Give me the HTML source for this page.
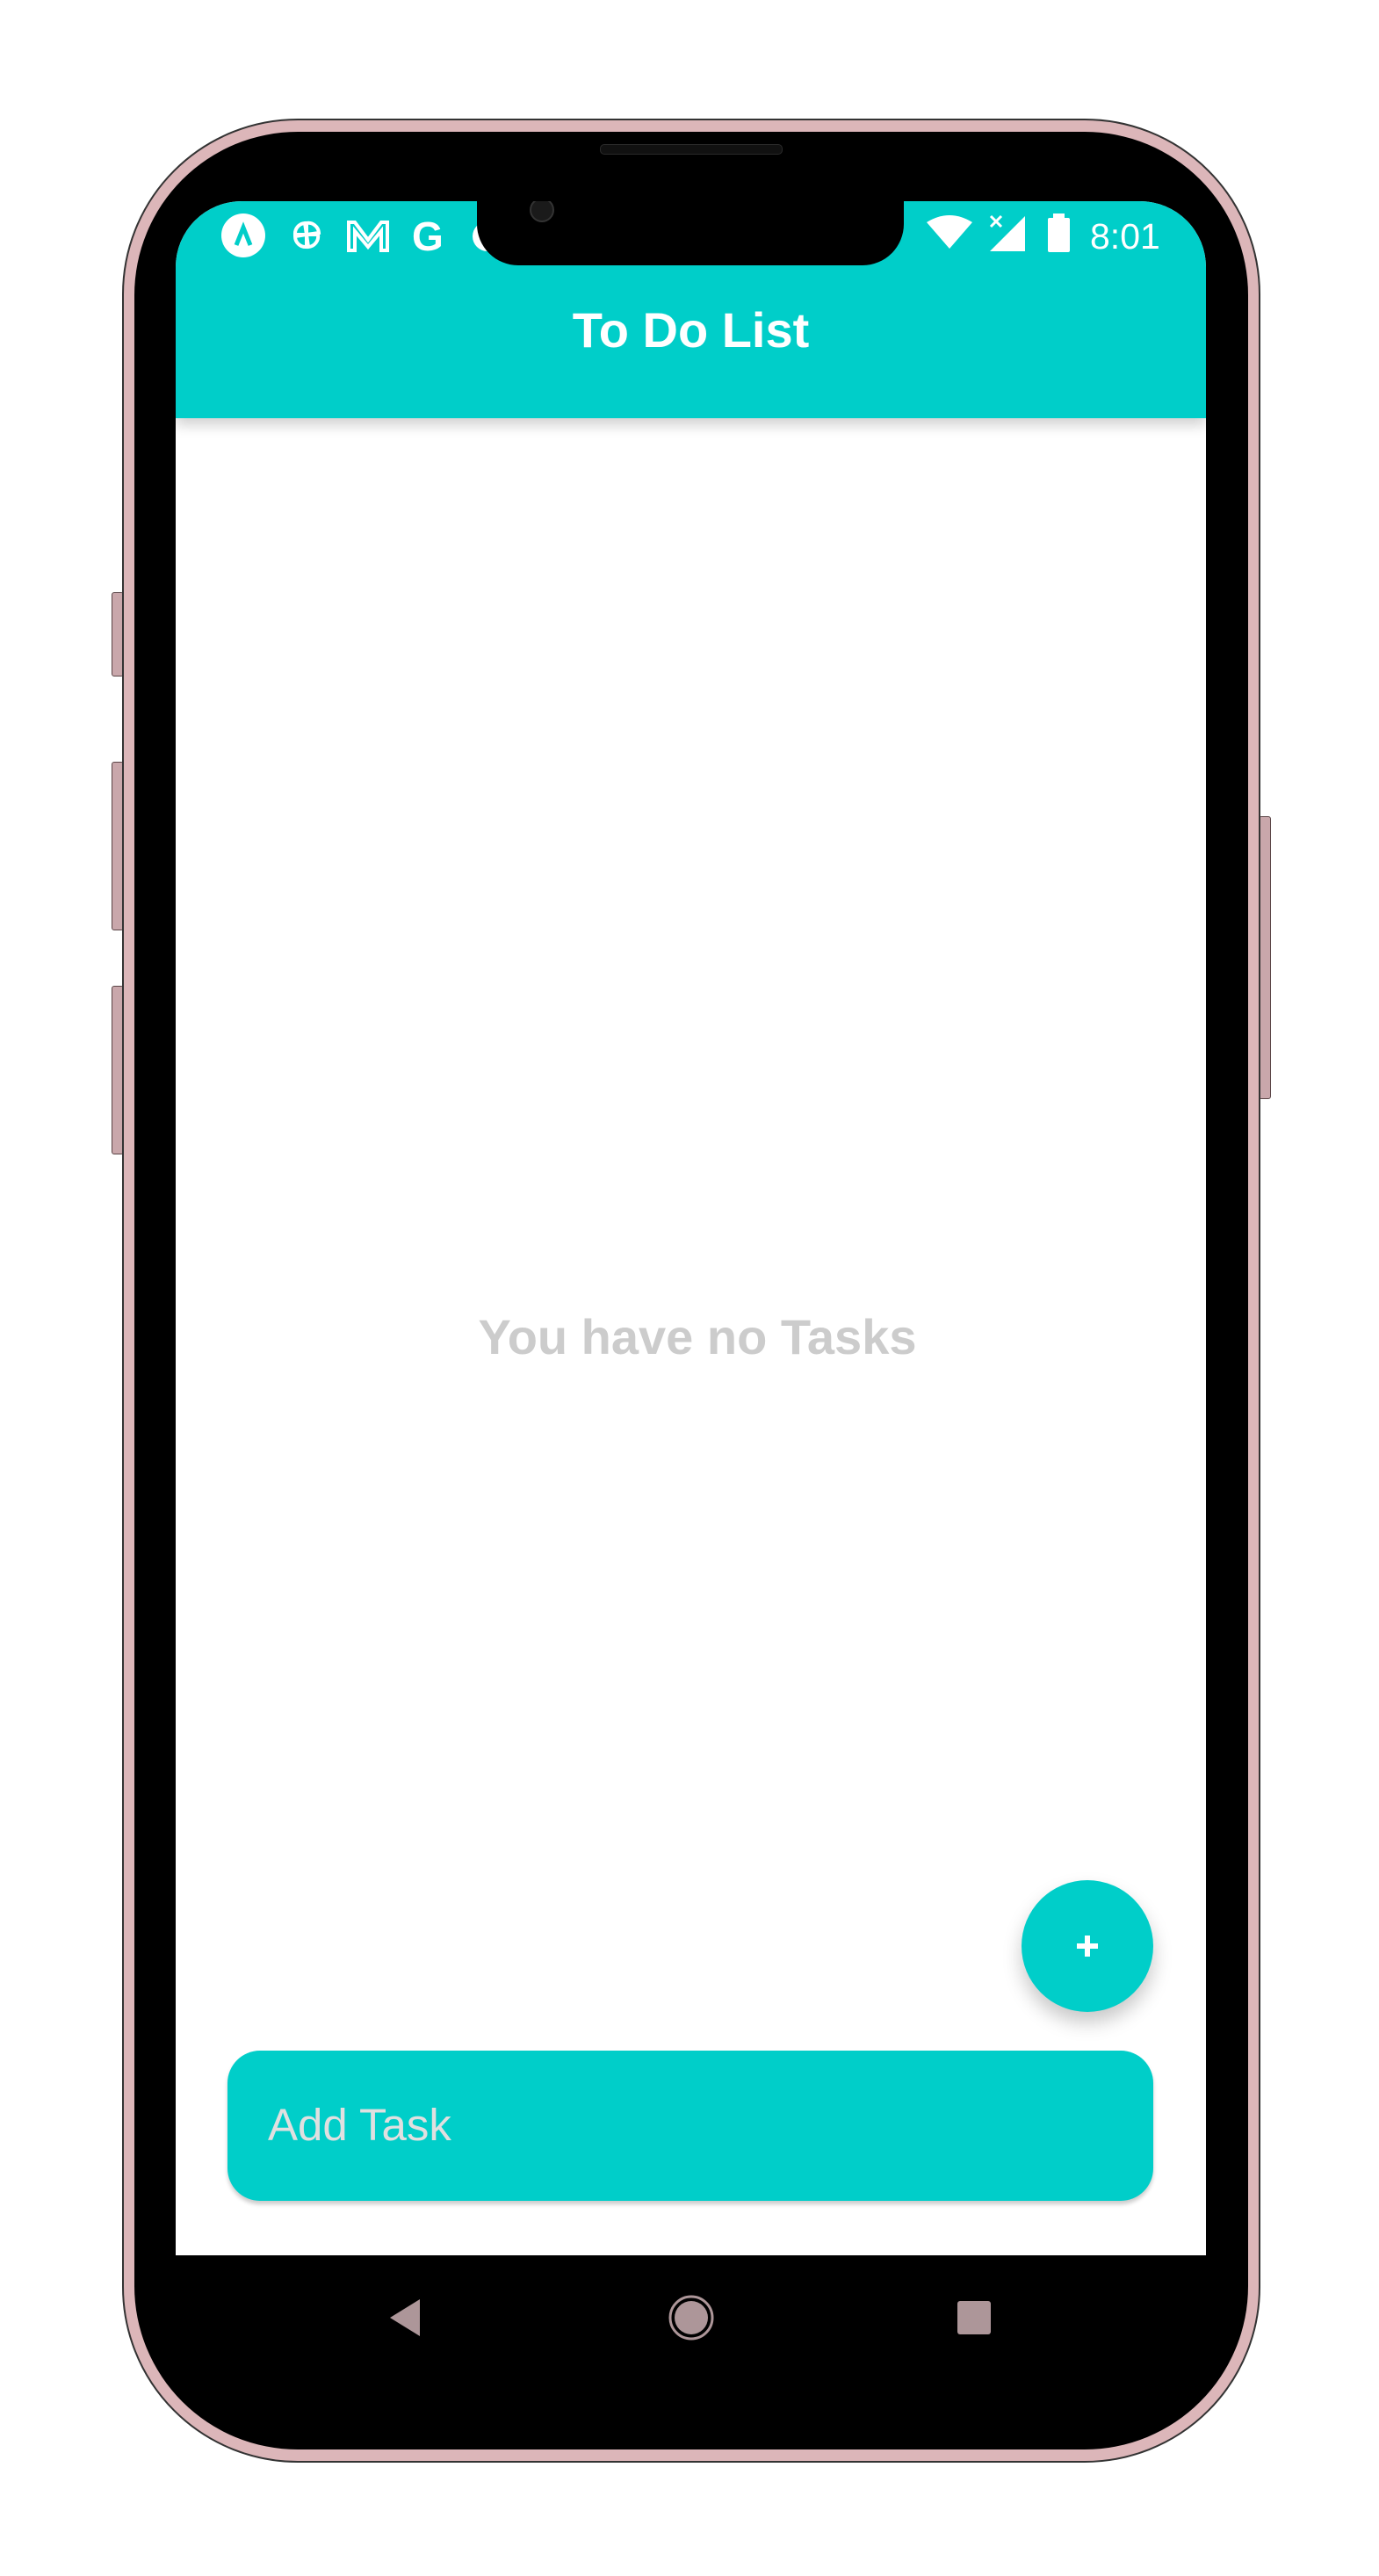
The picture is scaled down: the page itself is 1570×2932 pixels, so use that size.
<!DOCTYPE html>
<html><head><meta charset="utf-8">
<style>
html,body{margin:0;padding:0;background:#fff;width:1570px;height:2932px;overflow:hidden;font-family:"Liberation Sans",sans-serif;}
.abs{position:absolute;}
.btn{position:absolute;background:#c9a7ab;border:1px solid #5a4446;border-radius:3px;}
</style></head><body>
<div class="btn" style="left:127px;top:674px;width:12px;height:94px"></div>
<div class="btn" style="left:127px;top:867px;width:12px;height:190px"></div>
<div class="btn" style="left:127px;top:1122px;width:12px;height:190px"></div>
<div class="btn" style="left:1433px;top:929px;width:12px;height:320px"></div>
<div class="abs" style="left:139px;top:135px;width:1296px;height:2668px;border-radius:200px;background:#dcb6b9;border:2px solid #333;box-sizing:border-box"></div>
<div class="abs" style="left:153px;top:150px;width:1268px;height:2638px;border-radius:186px;background:#000;"></div>
<div class="abs" style="left:683px;top:164px;width:206px;height:10px;border-radius:5px;background:#111;border:1px solid #2a2a2a"></div>
<div class="abs" style="left:200px;top:229px;width:1173px;height:2338px;background:#fff;border-radius:75px 75px 0 0;overflow:hidden">
  <div class="abs" style="left:0;top:0;width:1173px;height:247px;background:#00cec9;box-shadow:0 8px 14px rgba(0,0,0,0.18)"></div>
  <div class="abs" style="left:0;top:112px;width:1173px;text-align:center;color:#fff;font-weight:bold;font-size:56px;line-height:70px">To Do List</div>
  <svg class="abs" style="left:0;top:0" width="1173" height="80" viewBox="0 0 1173 80">
    <circle cx="77" cy="39" r="25" fill="#fff"/>
    <path d="M69 50 L77 30 L85 50" stroke="#00cec9" stroke-width="5" fill="none"/>
    <g fill="none" stroke="#fff" stroke-width="4">
      <path d="M149 38 L149 25 A12 12 0 0 1 163 36 Z"/>
      <path d="M149 38 L162 38 A12 12 0 0 1 151 52 Z"/>
      <path d="M149 38 L149 52 A12 12 0 0 1 136 40 Z"/>
      <path d="M149 38 L136 38 A12 12 0 0 1 147 25 Z"/>
      <path d="M197 56 V24 H204 L219 44 L234 24 H241 V56 H234 V34 L219 52 L204 34 V56 Z"/>
    </g>
    <text x="269" y="56" font-family="Liberation Sans" font-weight="bold" font-size="46" fill="#fff">G</text>
    <circle cx="355" cy="40" r="17" fill="#fff"/>
    <path d="M855 24 Q881 8 907 24 L881 54 Z" fill="#fff"/>
    <path d="M967 17 V57 H927 Z" fill="#fff"/>
    <path d="M928 17 L940 29 M940 17 L928 29" stroke="#fff" stroke-width="3"/>
    <rect x="993" y="19" width="25" height="39" rx="2" fill="#fff"/>
    <rect x="999" y="14" width="13" height="6" fill="#fff"/>
    <text x="1041" y="54" font-family="Liberation Sans" font-size="41" fill="#fff">8:01</text>
  </svg>
  <div class="abs" style="left:343px;top:-10px;width:486px;height:83px;background:#000;border-radius:0 0 47px 47px"></div>
  <div class="abs" style="left:403px;top:-4px;width:24px;height:24px;border-radius:50%;background:#1a1a1a;border:2px solid #333"></div>
  <div class="abs" style="left:0;top:1258px;width:1188px;text-align:center;color:#cccccc;font-weight:bold;font-size:56px;line-height:70px">You have no Tasks</div>
  <div class="abs" style="left:963px;top:1911px;width:150px;height:150px;border-radius:50%;background:#00cec9;box-shadow:0 12px 22px rgba(0,0,0,0.22)"></div>
  <svg class="abs" style="left:1020px;top:1968px" width="36" height="36"><path d="M18 6V30M6 18H30" stroke="#fff" stroke-width="6"/></svg>
  <div class="abs" style="left:59px;top:2105px;width:1054px;height:171px;border-radius:37px;background:#00cec9;box-shadow:0 4px 5px rgba(0,0,0,0.2)"></div>
  <div class="abs" style="left:105px;top:2160px;color:#e0e0e0;font-size:51px;line-height:60px">Add Task</div>
</div>
<svg class="abs" style="left:0;top:2600px" width="1570" height="80">
  <path d="M478 17 V59 L444 38 Z" fill="#ad9699"/>
  <circle cx="787" cy="38" r="24" fill="none" stroke="#ad9699" stroke-width="3"/>
  <circle cx="787" cy="38" r="19" fill="#ad9699"/>
  <rect x="1090" y="19" width="38" height="38" rx="3" fill="#ad9699"/>
</svg>
</body></html>
